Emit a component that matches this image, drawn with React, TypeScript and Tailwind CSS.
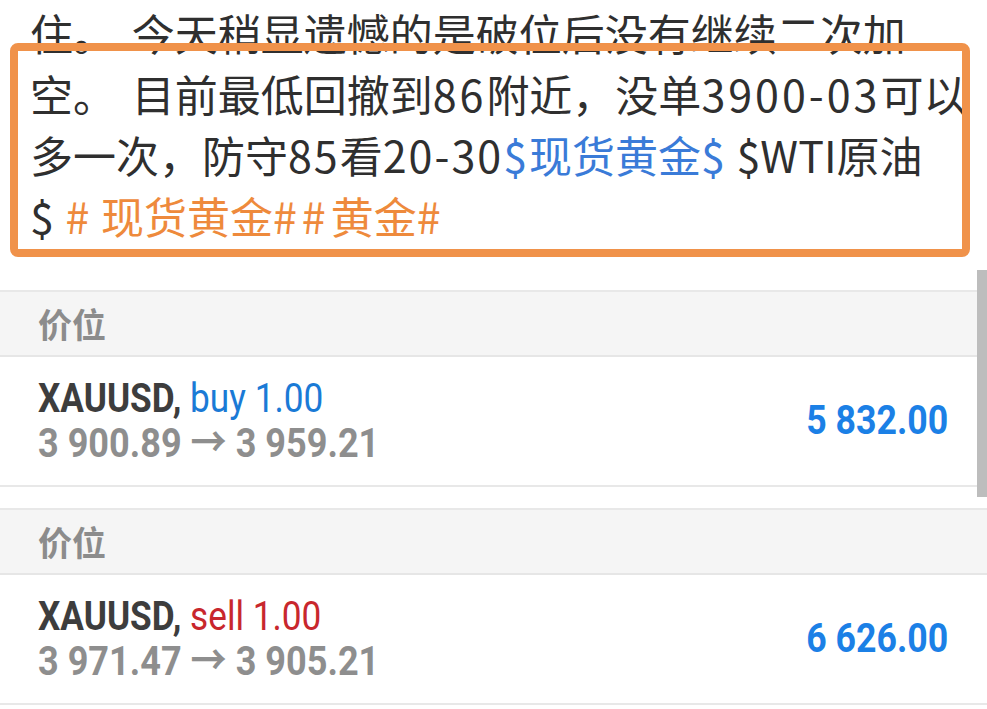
import React from "react";

type Trade = {
  side: "buy" | "sell";
  volume: string;
  open: string;
  close: string;
  profit: string;
};

const trades: Trade[] = [
  { side: "buy", volume: "1.00", open: "3 900.89", close: "3 959.21", profit: "5 832.00" },
  { side: "sell", volume: "1.00", open: "3 971.47", close: "3 905.21", profit: "6 626.00" },
];

const cjk = "font-['Noto_Sans_CJK_SC',sans-serif]";
const cond = "font-['Roboto','Noto_Sans_CJK_SC',sans-serif]";

// latin runs inside the post are set a little wider than the CJK font gives
const L = ({ children }: { children: React.ReactNode }) => (
  <span className="tracking-[2px] [word-spacing:4px]">{children}</span>
);
const Wide = ({ children }: { children: React.ReactNode }) => (
  <span className="tracking-[3px]">{children}</span>
);

function TradeCard({ t }: { t: Trade }) {
  return (
    <div className="border-t-2 border-[#e8e8e8]">
      <div className="h-[65px] bg-[#f5f5f5] flex items-center pl-[38px] border-b-2 border-[#e6e6e6]">
        <span className={`${cjk} text-[34px] font-bold text-[#8c8c8c] leading-none`}>价位</span>
      </div>
      <div className="h-[130px] flex items-center justify-between pl-[38px] pr-[39px] border-b-2 border-[#e8e8e8] bg-white">
        <div className={`${cond} flex flex-col origin-left scale-x-[0.88]`}>
          <div className="text-[40px] leading-[44px] whitespace-nowrap">
            <span className="font-bold text-[#3d3d3d]">XAUUSD, </span>
            <span className={t.side === "buy" ? "text-[#1a7ad6]" : "text-[#c8272d]"}>
              {t.side} {t.volume}
            </span>
          </div>
          <div className="text-[41px] leading-[44px] font-bold text-[#8e8e8e] whitespace-nowrap">
            {t.open} → {t.close}
          </div>
        </div>
        <div className={`${cond} text-[41px] font-bold text-[#1b80e6] origin-right scale-x-[0.87] whitespace-nowrap`}>
          {t.profit}
        </div>
      </div>
    </div>
  );
}

export default function App() {
  return (
    <div className="relative w-[987px] h-[709px] overflow-hidden bg-white">
      {/* post text */}
      <div className={`${cjk} pt-[2px] pl-[30px] text-[43px] leading-[61px] text-[#2f2f2f]`}>
        <div className="whitespace-nowrap">
          住。<L> </L>今天稍显遗憾的是破位后没有继续二次加
        </div>
        <div className="whitespace-nowrap">
          空。<L> </L>目前最低回撤到<Wide>86</Wide>附近，没单<Wide>3900-03</Wide>可以
        </div>
        <div className="whitespace-nowrap">
          多一次，防守<L>85</L>看<L>20-30</L>
          <span className="text-[#3a7bd8]">
            <L>$</L>现货黄金<L>$</L>
          </span>
          {" $WTI"}原油
        </div>
        <div className="whitespace-nowrap">
          <span className="tracking-[1px]">$ </span>
          <span className="text-[#ee8a3c]">
            <span className="tracking-[1px]"># </span>现货黄金
            <span className="tracking-[5px]">##</span>黄金<L>#</L>
          </span>
        </div>
      </div>

      {/* highlight frame drawn over the text */}
      <div className="absolute left-[10px] top-[43px] w-[960px] h-[214px] border-[8px] border-[#f0924a] rounded-[8px]" />

      {/* trades */}
      <div className="mt-[44px]">
        <TradeCard t={trades[0]} />
        <div className="h-[21px] bg-white" />
        <TradeCard t={trades[1]} />
      </div>

      {/* scrollbar */}
      <div className="absolute right-0 top-[270px] w-[10px] h-[227px] bg-[#bdbdbd]" />
    </div>
  );
}
